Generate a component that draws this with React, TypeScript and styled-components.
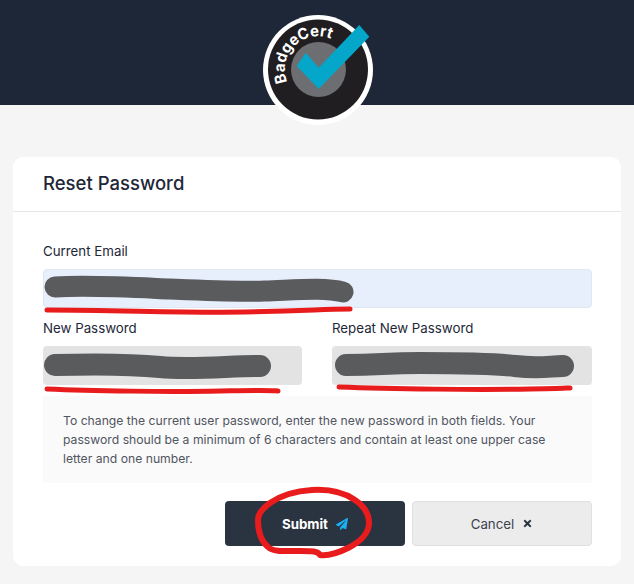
import React from "react";
import styled, { createGlobalStyle } from "styled-components";
import { FaPaperPlane, FaTimes } from "react-icons/fa";

const Global = createGlobalStyle`
  html, body { margin: 0; padding: 0; background: #f5f5f5; }
  * { box-sizing: border-box; }
  body { font-family: Inter, "Liberation Sans", sans-serif; color: #1e2738; }
`;

const Page = styled.div`
  position: relative;
  width: 634px;
  height: 584px;
  overflow: hidden;
`;

const Header = styled.header`
  height: 105px;
  background: #1e2738;
`;

const LogoMark = styled.svg`
  position: absolute;
  left: 258px;
  top: 10px;
  width: 120px;
  height: 120px;
`;

const Card = styled.main`
  margin: 52px 13px 0;
  height: 409px;
  background: #fff;
  border-radius: 10px;
`;

const CardHeader = styled.div`
  height: 55px;
  padding: 0 30px 2px;
  display: flex;
  align-items: center;
  border-bottom: 1px solid #e4e5e7;
`;

const Title = styled.h1`
  margin: 0;
  font-size: 18.5px;
  font-weight: 500;
  color: #1e2738;
`;

const CardBody = styled.div`
  padding: 30px 29px 0 30px;
  display: flex;
  flex-direction: column;
`;

const Row = styled.div`
  display: flex;
  gap: 30px;
`;

const Field = styled.div<{ $width?: number }>`
  flex: ${(p) => (p.$width ? `0 0 ${p.$width}px` : "1")};
  display: flex;
  flex-direction: column;
  margin-bottom: 11px;
`;

const Label = styled.label`
  font-size: 13.3px;
  line-height: 18px;
  font-weight: 400;
  color: #1e2738;
  margin-bottom: 9px;
`;

const Input = styled.input<{ $filled?: boolean }>`
  width: 100%;
  height: 39px;
  border-radius: 4px;
  border: ${(p) => (p.$filled ? "1px solid #e0e6f2" : "none")};
  background: ${(p) => (p.$filled ? "#e8effc" : "#e3e3e3")};
  outline: none;
`;

const Note = styled.p`
  margin: 0;
  height: 87px;
  padding: 15px 20px 0;
  background: #fafafa;
  font-size: 12.2px;
  line-height: 19px;
  color: #50555f;
`;

const Actions = styled.div`
  display: flex;
  justify-content: flex-end;
  gap: 7px;
  margin-top: 18px;
`;

const Button = styled.button<{ $primary?: boolean }>`
  width: 180px;
  height: 45px;
  display: flex;
  align-items: center;
  justify-content: center;
  gap: 8px;
  border-radius: 4px;
  font-family: inherit;
  font-size: 13.3px;
  font-weight: ${(p) => (p.$primary ? 700 : 400)};
  color: ${(p) => (p.$primary ? "#fff" : "#3c4350")};
  background: ${(p) => (p.$primary ? "#2a3340" : "#ececec")};
  border: ${(p) => (p.$primary ? "none" : "1px solid #e0e0e0")};
`;

const Scribbles = styled.svg`
  position: absolute;
  inset: 0;
  width: 634px;
  height: 584px;
  pointer-events: none;
`;

export default function App() {
  return (
    <Page>
      <Global />
      <Header />
      <Card>
        <CardHeader>
          <Title>Reset Password</Title>
        </CardHeader>
        <CardBody>
          <Field>
            <Label>Current Email</Label>
            <Input $filled readOnly />
          </Field>
          <Row>
            <Field $width={259}>
              <Label>New Password</Label>
              <Input type="password" readOnly />
            </Field>
            <Field>
              <Label>Repeat New Password</Label>
              <Input type="password" readOnly />
            </Field>
          </Row>
          <Note>
            To change the current user password, enter the new password in both fields. Your
            <br />
            password should be a minimum of 6 characters and contain at least one upper case
            <br />
            letter and one number.
          </Note>
          <Actions>
            <Button $primary>
              Submit
              <FaPaperPlane size={12} color="#1cb0f0" />
            </Button>
            <Button>
              Cancel
              <FaTimes size={11} color="#2a3340" />
            </Button>
          </Actions>
        </CardBody>
      </Card>

      <Scribbles viewBox="0 0 634 584" fill="none" strokeLinecap="round" strokeLinejoin="round">
        <path
          d="M55 287 C 90 285, 125 287, 170 289 S 235 292, 265 291 S 325 287, 343 292"
          stroke="#5a5b5d"
          strokeWidth="21"
        />
        <path d="M47 310 C 120 310, 180 313, 245 312 S 320 309, 350 309" stroke="#e81c1c" strokeWidth="5" />
        <path d="M55 365 C 90 364, 130 364, 160 367 S 230 366, 260 366" stroke="#5a5b5d" strokeWidth="22" />
        <path d="M47 389 C 90 391, 170 392, 220 391 S 265 390, 278 391" stroke="#e81c1c" strokeWidth="5" />
        <path d="M346 365 C 380 365, 385 363, 420 363 S 490 363, 515 366 S 550 366, 563 366" stroke="#5a5b5d" strokeWidth="22" />
        <path d="M339 387 C 390 389, 480 390, 530 389 S 560 388, 570 388" stroke="#e81c1c" strokeWidth="5" />
        <path
          d="M270 503 C 280 496, 295 491, 312 490 C 330 489, 345 493, 355 500 C 364 506, 369 514, 369 523 C 369 533, 360 542, 348 548 C 338 553, 328 556, 320 555 C 318 551, 312 551, 300 551 C 285 551, 273 552, 268 547 C 261 541, 258 530, 258 520 C 258 513, 263 508, 270 503 Z"
          stroke="#e81c1c"
          strokeWidth="6"
        />
      </Scribbles>

      <LogoMark viewBox="258 10 120 120" role="img" aria-label="BadgeCert">
        <circle cx="318" cy="70" r="55" fill="#fff" />
        <circle cx="318" cy="69.5" r="50" fill="#201e20" />
        <circle cx="318.5" cy="69.5" r="27.5" fill="#6d6e71" />
        <path id="badge-arc" d="M 287.4 81.9 A 33 33 0 0 1 346.6 53" fill="none" />
        <text fontFamily="Inter, 'Liberation Sans', sans-serif" fontWeight="700" fontSize="15.5" fill="#fff">
          <textPath href="#badge-arc" textLength="78" lengthAdjust="spacingAndGlyphs">BadgeCert</textPath>
        </text>
        <polygon points="305.7,52.7 318.7,67.7 359.3,25 369.3,36.7 318.7,89 296.7,66" fill="#04a6c9" />
      </LogoMark>
    </Page>
  );
}
